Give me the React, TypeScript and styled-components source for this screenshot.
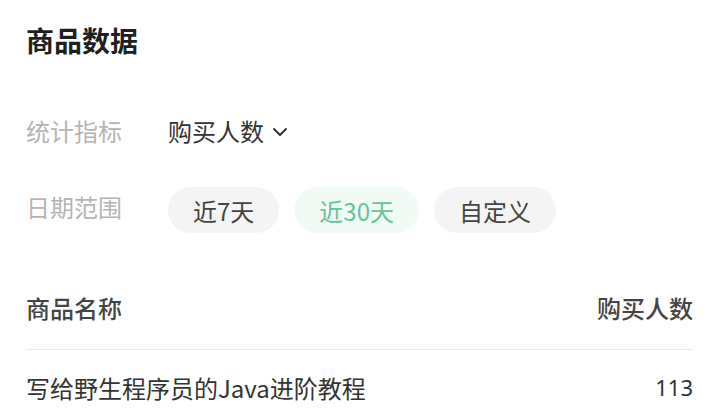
import React, { useState } from "react";
import styled, { createGlobalStyle } from "styled-components";

const GlobalStyle = createGlobalStyle`
  html, body {
    margin: 0;
    padding: 0;
    background: #ffffff;
  }
  body {
    font-family: "Noto Sans CJK SC", "Noto Sans", sans-serif;
  }
`;

const ranges = ["近7天", "近30天", "自定义"];

const rows = [{ name: "写给野生程序员的Java进阶教程", count: 113 }];

export default function App() {
  const [range, setRange] = useState("近30天");

  return (
    <>
      <GlobalStyle />
      <Page>
        <Title>商品数据</Title>
        <Filters>
          <FilterRow>
            <Label>统计指标</Label>
            <Select>
              购买人数
              <svg width="20" height="20" viewBox="0 0 20 20" fill="none">
                <path d="M4 8l6 6 6-6" stroke="#333" strokeWidth="2" strokeLinecap="round" strokeLinejoin="round" />
              </svg>
            </Select>
          </FilterRow>
          <FilterRow>
            <Label>日期范围</Label>
            <Pills>
              {ranges.map((r) => (
                <Pill key={r} $active={r === range} onClick={() => setRange(r)}>
                  {r}
                </Pill>
              ))}
            </Pills>
          </FilterRow>
        </Filters>
        <Table>
          <HeadRow>
            <span>商品名称</span>
            <span>购买人数</span>
          </HeadRow>
          {rows.map((row) => (
            <BodyRow key={row.name}>
              <span>{row.name}</span>
              <Count>{row.count}</Count>
            </BodyRow>
          ))}
        </Table>
      </Page>
    </>
  );
}

const Page = styled.div`
  padding: 20px 27px 0 26px;
`;

const Title = styled.h1`
  margin: 0;
  font-size: 28px;
  line-height: 40px;
  font-weight: 700;
  color: #1f1f1f;
`;

const Filters = styled.div`
  display: flex;
  flex-direction: column;
  gap: 30px;
  margin-top: 51px;
`;

const FilterRow = styled.div`
  display: flex;
  align-items: flex-start;
  min-height: 46px;
`;

const Label = styled.div`
  width: 142px;
  flex-shrink: 0;
  font-size: 24px;
  line-height: 40px;
  color: #b5b5b5;
`;

const Select = styled.div`
  display: flex;
  align-items: center;
  gap: 6px;
  font-size: 24px;
  line-height: 40px;
  color: #333333;
`;

const Pills = styled.div`
  display: flex;
  gap: 15px;
`;

const Pill = styled.div<{ $active?: boolean }>`
  height: 46px;
  padding: 0 25px;
  border-radius: 23px;
  display: flex;
  align-items: center;
  font-size: 24px;
  background: ${(p) => (p.$active ? "#f1faf5" : "#f4f4f4")};
  color: ${(p) => (p.$active ? "#62c69b" : "#444444")};
  cursor: pointer;
`;

const Table = styled.div`
  margin-top: 44px;
`;

const HeadRow = styled.div`
  display: flex;
  justify-content: space-between;
  align-items: center;
  height: 60px;
  padding-bottom: 12px;
  border-bottom: 1px solid #ebebeb;
  font-size: 24px;
  font-weight: 500;
  color: #444444;
`;

const BodyRow = styled.div`
  display: flex;
  justify-content: space-between;
  align-items: center;
  height: 74px;
  font-size: 24px;
  color: #333333;
`;

const Count = styled.span`
  font-family: "Noto Sans", sans-serif;
  font-size: 22px;
  color: #333333;
`;
